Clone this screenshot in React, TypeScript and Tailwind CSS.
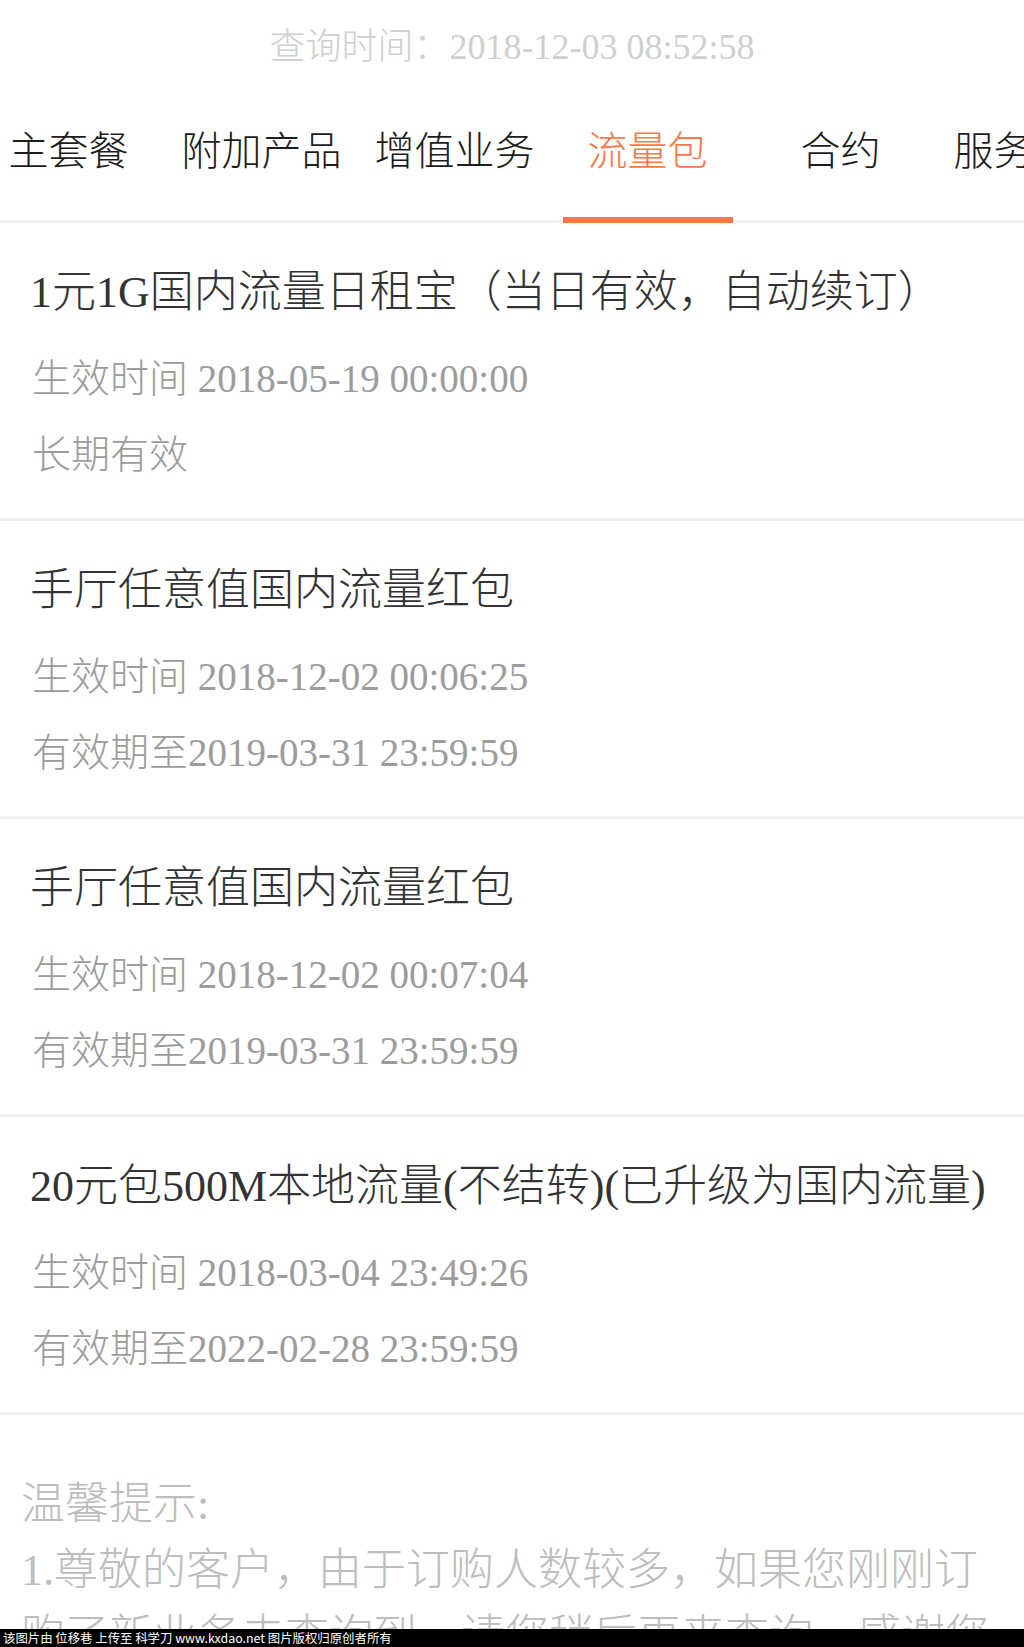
import React from 'react';

interface Pkg {
  title: string;
  start: string;
  end: string;
}

const tabs = ['主套餐', '附加产品', '增值业务', '流量包', '合约', '服务功能'];

const packages: Pkg[] = [
  {
    title: '1元1G国内流量日租宝（当日有效，自动续订）',
    start: '生效时间 2018-05-19 00:00:00',
    end: '长期有效'
  },
  {
    title: '手厅任意值国内流量红包',
    start: '生效时间 2018-12-02 00:06:25',
    end: '有效期至2019-03-31 23:59:59'
  },
  {
    title: '手厅任意值国内流量红包',
    start: '生效时间 2018-12-02 00:07:04',
    end: '有效期至2019-03-31 23:59:59'
  },
  {
    title: '20元包500M本地流量(不结转)(已升级为国内流量)',
    start: '生效时间 2018-03-04 23:49:26',
    end: '有效期至2022-02-28 23:59:59'
  }
];

const PackageCard = ({ pkg }: { pkg: Pkg }) => (
  <div className="px-[30px] pt-[40px] pb-[25px] border-b-[3px] border-[#efefef]">
    <div className="text-[44px] leading-[60px] text-[#333333] whitespace-nowrap">{pkg.title}</div>
    <div className="mt-[18px] text-[39px] leading-[76px] text-[#9c9c9c] whitespace-nowrap pl-[2px]">
      <div>{pkg.start}</div>
      <div>{pkg.end}</div>
    </div>
  </div>
);

export default function App() {
  return (
    <div className="w-full h-[1647px] overflow-hidden flex flex-col bg-white font-['Liberation_Serif','Noto_Sans_CJK_SC',serif] font-light">
      <div className="flex-1 min-h-0 overflow-hidden">
        {/* query time */}
        <div className="h-[94px] flex items-center justify-center text-[36px] text-[#cfcfcf]">
          查询时间：2018-12-03 08:52:58
        </div>

        {/* tabs */}
        <div className="overflow-hidden">
          <div className="flex -ml-[28px]">
            {tabs.map((t, i) => {
              const active = i === 3;
              return (
                <div
                  key={t}
                  className="w-[193px] shrink-0 h-[129px] pt-[34px] flex flex-col items-center border-b-[3px] border-[#efefef]"
                >
                  <span
                    className={
                      active
                        ? 'text-[40px] leading-[48px] text-[#fd7849] whitespace-nowrap'
                        : 'text-[40px] leading-[48px] text-[#1c1c1c] whitespace-nowrap'
                    }
                  >
                    {t}
                  </span>
                  {active && <div className="mt-auto -mb-[3px] h-[6px] w-[170px] bg-[#fe7646]" />}
                </div>
              );
            })}
          </div>
        </div>

        {packages.map((p, i) => (
          <PackageCard key={i} pkg={p} />
        ))}

        {/* tips */}
        <div className="px-[21px] pt-[57px] text-[44px] leading-[66px] text-[#bdbdbd]">
          <div>温馨提示:</div>
          <div>1.尊敬的客户，由于订购人数较多，如果您刚刚订购了新业务未查询到，请您稍后再来查询，感谢您的理解！</div>
        </div>
      </div>

      <div className="h-[18px] shrink-0 bg-black text-white text-[12.4px] leading-[18px] pl-[3px] whitespace-nowrap font-['Noto_Sans_CJK_SC',sans-serif] font-normal">
        该图片由 位移巷 上传至 科学刀 www.kxdao.net 图片版权归原创者所有
      </div>
    </div>
  );
}
